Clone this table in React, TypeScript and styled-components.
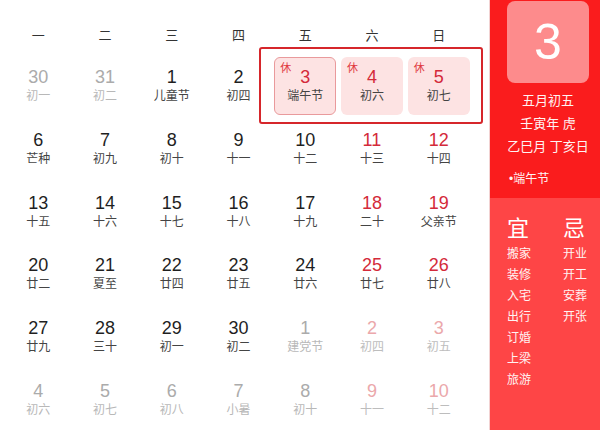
import React from "react";
import styled, { createGlobalStyle, css } from "styled-components";

const Global = createGlobalStyle`
  html, body { margin: 0; padding: 0; background: #fff; }
  body { font-family: "Liberation Sans", "Noto Sans CJK SC", sans-serif; }
  * { box-sizing: border-box; }
`;

type Tone = "normal" | "red" | "dim" | "dimRed";

interface Day {
  n: number;
  l: string;
  t?: Tone;
  rest?: boolean;
  sel?: boolean;
}

const weeks: Day[][] = [
  [
    { n: 30, l: "初一", t: "dim" },
    { n: 31, l: "初二", t: "dim" },
    { n: 1, l: "儿童节" },
    { n: 2, l: "初四" },
    { n: 3, l: "端午节", t: "red", rest: true, sel: true },
    { n: 4, l: "初六", t: "red", rest: true },
    { n: 5, l: "初七", t: "red", rest: true },
  ],
  [
    { n: 6, l: "芒种" },
    { n: 7, l: "初九" },
    { n: 8, l: "初十" },
    { n: 9, l: "十一" },
    { n: 10, l: "十二" },
    { n: 11, l: "十三", t: "red" },
    { n: 12, l: "十四", t: "red" },
  ],
  [
    { n: 13, l: "十五" },
    { n: 14, l: "十六" },
    { n: 15, l: "十七" },
    { n: 16, l: "十八" },
    { n: 17, l: "十九" },
    { n: 18, l: "二十", t: "red" },
    { n: 19, l: "父亲节", t: "red" },
  ],
  [
    { n: 20, l: "廿二" },
    { n: 21, l: "夏至" },
    { n: 22, l: "廿四" },
    { n: 23, l: "廿五" },
    { n: 24, l: "廿六" },
    { n: 25, l: "廿七", t: "red" },
    { n: 26, l: "廿八", t: "red" },
  ],
  [
    { n: 27, l: "廿九" },
    { n: 28, l: "三十" },
    { n: 29, l: "初一" },
    { n: 30, l: "初二" },
    { n: 1, l: "建党节", t: "dim" },
    { n: 2, l: "初四", t: "dimRed" },
    { n: 3, l: "初五", t: "dimRed" },
  ],
  [
    { n: 4, l: "初六", t: "dim" },
    { n: 5, l: "初七", t: "dim" },
    { n: 6, l: "初八", t: "dim" },
    { n: 7, l: "小暑", t: "dim" },
    { n: 8, l: "初十", t: "dim" },
    { n: 9, l: "十一", t: "dimRed" },
    { n: 10, l: "十二", t: "dimRed" },
  ],
];

const weekdays = ["一", "二", "三", "四", "五", "六", "日"];
const selects = [
  { w: 97, m: 0 },
  { w: 82, m: 48 },
  { w: 98, m: 48 },
  { w: 66, m: 24 },
];
const yi = ["搬家", "装修", "入宅", "出行", "订婚", "上梁", "旅游"];
const ji = ["开业", "开工", "安葬", "开张"];

const numColor: Record<Tone, string> = {
  normal: "#1f1f1f",
  red: "#d42a3a",
  dim: "#ababab",
  dimRed: "#eba8ab",
};
const lunarColor: Record<Tone, string> = {
  normal: "#444",
  red: "#444",
  dim: "#b8b8b8",
  dimRed: "#bdbdbd",
};

const Page = styled.div`
  display: flex;
  width: 600px;
  height: 430px;
  overflow: hidden;
`;

const Main = styled.div`
  width: 489px;
  padding-left: 5px;
  flex: none;
  display: flex;
  flex-direction: column;
`;

const Toolbar = styled.div`
  display: flex;
  height: 3px;
  overflow: hidden;
`;

const SelectStub = styled.div<{ $w: number; $m: number }>`
  width: ${(p) => p.$w}px;
  margin-left: ${(p) => p.$m}px;
  height: 2px;
  border: 1px solid #e3e3e3;
  border-top: none;
  border-radius: 0 0 6px 6px;
  box-shadow: 0 1px 1px rgba(0, 0, 0, 0.04);
`;

const WeekHeader = styled.div`
  display: grid;
  grid-template-columns: repeat(7, 1fr);
  width: 467px;
  margin-top: 23px;
  height: 26px;
`;

const WeekDay = styled.div`
  text-align: center;
  line-height: 26px;
  font-size: 13px;
  color: #333;
`;

const Grid = styled.div`
  position: relative;
  display: grid;
  grid-template-columns: repeat(7, 1fr);
  grid-auto-rows: 62.7px;
  width: 467px;
  margin-top: 6px;
`;

const Highlight = styled.div`
  position: absolute;
  left: 254px;
  top: -8px;
  width: 224px;
  height: 77px;
  border: 2.5px solid #d6262b;
  border-radius: 3px;
  pointer-events: none;
`;

const Cell = styled.div`
  display: flex;
  align-items: center;
  justify-content: center;
  padding: 0 2.5px;
`;

const DayBox = styled.div<{ $rest?: boolean; $sel?: boolean }>`
  position: relative;
  width: 100%;
  height: 58px;
  display: flex;
  flex-direction: column;
  align-items: center;
  justify-content: center;
  border-radius: 6px;
  border: 1.5px solid transparent;
  ${(p) =>
    p.$rest &&
    css`
      background: #fde3e3;
    `}
  ${(p) =>
    p.$sel &&
    css`
      border-color: #e99a9c;
    `}
`;

const Num = styled.div<{ $t: Tone }>`
  font-size: 18px;
  line-height: 20px;
  color: ${(p) => numColor[p.$t]};
`;

const Lunar = styled.div<{ $t: Tone }>`
  font-size: 12px;
  line-height: 18px;
  color: ${(p) => lunarColor[p.$t]};
`;

const RestTag = styled.span`
  position: absolute;
  left: 5px;
  top: 3px;
  font-size: 11px;
  line-height: 14px;
  color: #e0393f;
`;

const Side = styled.div`
  flex: none;
  width: 111px;
  min-width: 0;
  display: flex;
  flex-direction: column;
  border-left: 1px solid #f2d2d2;
`;

const SideTop = styled.div`
  height: 198px;
  background: #fa1c1d;
  padding: 1px 11px 0 17px;
  color: #fff3f3;
  display: flex;
  flex-direction: column;
`;

const BigDay = styled.div`
  height: 82px;
  flex: none;
  border-radius: 8px;
  background: #fd8b8c;
  color: #fff;
  font-size: 50px;
  display: flex;
  align-items: center;
  justify-content: center;
`;

const InfoLines = styled.div`
  margin-top: 6px;
  display: flex;
  flex-direction: column;
  align-items: center;
  font-size: 13px;
  line-height: 23px;
  white-space: nowrap;
`;

const Festival = styled.div`
  margin-top: 11px;
  padding-left: 2px;
  font-size: 12px;
  line-height: 20px;
  white-space: nowrap;
`;

const SideBottom = styled.div`
  flex: 1;
  background: #fe4546;
  padding: 17px 0 0 17px;
  display: grid;
  grid-template-columns: 56px 56px;
  align-content: start;
  color: #fff3f3;
`;

const LuckCol = styled.div`
  display: flex;
  flex-direction: column;
`;

const LuckTitle = styled.div`
  font-size: 22px;
  line-height: 28px;
  color: #fff;
  margin-bottom: 1px;
`;

const LuckItem = styled.div`
  font-size: 12px;
  line-height: 21px;
`;

export default function App() {
  return (
    <>
      <Global />
      <Page>
        <Main>
          <Toolbar>
            {selects.map((s, i) => (
              <SelectStub key={i} $w={s.w} $m={s.m} />
            ))}
          </Toolbar>
          <WeekHeader>
            {weekdays.map((w) => (
              <WeekDay key={w}>{w}</WeekDay>
            ))}
          </WeekHeader>
          <Grid>
            {weeks.flat().map((d, i) => {
              const t = d.t ?? "normal";
              return (
                <Cell key={i}>
                  <DayBox $rest={d.rest} $sel={d.sel}>
                    {d.rest && <RestTag>休</RestTag>}
                    <Num $t={t}>{d.n}</Num>
                    <Lunar $t={t}>{d.l}</Lunar>
                  </DayBox>
                </Cell>
              );
            })}
            <Highlight />
          </Grid>
        </Main>
        <Side>
          <SideTop>
            <BigDay>3</BigDay>
            <InfoLines>
              <div>五月初五</div>
              <div>壬寅年 虎</div>
              <div>乙巳月 丁亥日</div>
            </InfoLines>
            <Festival>•端午节</Festival>
          </SideTop>
          <SideBottom>
            <LuckCol>
              <LuckTitle>宜</LuckTitle>
              {yi.map((x) => (
                <LuckItem key={x}>{x}</LuckItem>
              ))}
            </LuckCol>
            <LuckCol>
              <LuckTitle>忌</LuckTitle>
              {ji.map((x) => (
                <LuckItem key={x}>{x}</LuckItem>
              ))}
            </LuckCol>
          </SideBottom>
        </Side>
      </Page>
    </>
  );
}
